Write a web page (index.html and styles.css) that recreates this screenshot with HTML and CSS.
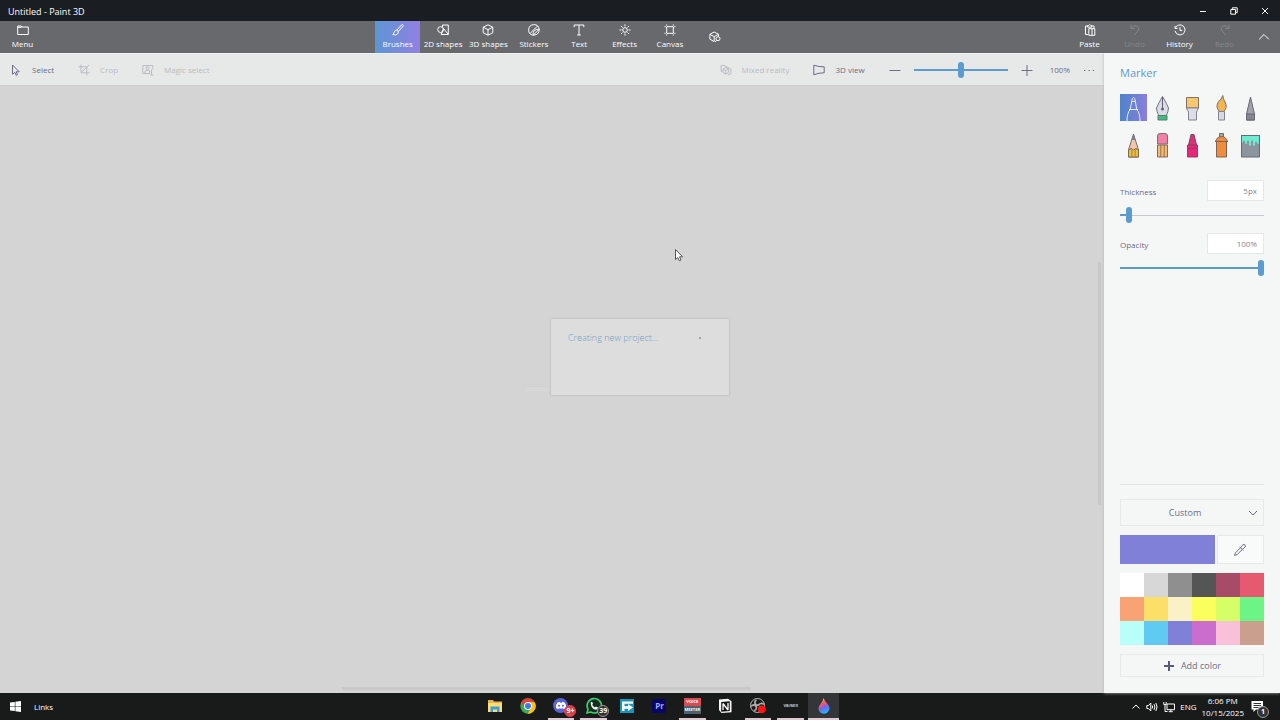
FILE: index.html
```
<!DOCTYPE html>
<html lang="en">
<head>
    <meta charset="UTF-8">
    <title>Untitled - Paint 3D</title>
    <link rel="stylesheet" href="styles.css">
</head>
<body>
<header class="titlebar">
    <h1>Untitled - Paint 3D</h1>
    <div class="winbtns">
        <button aria-label="Minimize"><svg width="8" height="8" viewBox="0 0 8 8"><path d="M1 4.5h6"/></svg></button>
        <button aria-label="Restore"><svg width="8" height="8" viewBox="0 0 8 8"><path d="M.8 2.5h4.7v4.7H.8zM2.3 2.3V.8h4.9v4.9H5.7"/></svg></button>
        <button aria-label="Close"><svg width="8" height="8" viewBox="0 0 8 8"><path d="M1 1l6 6M7 1L1 7"/></svg></button>
    </div>
</header>

<nav class="ribbon">
    <div class="ribbon-left">
        <button class="tab"><svg width="12" height="12" viewBox="0 0 12 12"><path d="M.7 2h3.600l.8 1h6.200v7.500H.7zM.7 3.400h3.600l.8-.6"/></svg>Menu</button>
    </div>
    <div class="tabs">
        <button class="tab active"><svg width="12" height="12" viewBox="0 0 12 12"><path d="M4.600 6.200L9.600.9q1-.6 1.500.1.400.7-.2 1.400L6.200 7.700M4.600 6.200q1.300.2 1.600 1.500M4.600 6.200q-1.800-.1-2.300 1.700-.3 1.900-1.600 2.600 3.300 1.200 4.900-.5.8-1 .6-2.300"/></svg>Brushes</button>
        <button class="tab"><svg width="12" height="12" viewBox="0 0 12 12"><circle cx="3.600" cy="5.600" r="2.900"/><path d="M5.500 3.200V1h5.800v9.500M6.500 4.500L11.300 10.500H4.200z"/></svg>2D shapes</button>
        <button class="tab"><svg width="12" height="12" viewBox="0 0 12 12"><path d="M6 .8l4.800 2.400v5.500L6 11.200 1.200 8.700V3.200zM1.200 3.200L6 5.700l4.800-2.500M6 5.700v5.500"/></svg>3D shapes</button>
        <button class="tab"><svg width="12" height="12" viewBox="0 0 12 12"><path d="M11.200 5.200A5.300 5.300 0 1 0 5.200 11.200M11.200 5.200Q11.500 10.800 5.200 11.200M5.200 11.200Q4.200 5.300 11.200 5.200M2 9.500L9.500 2M5.200 11.200l6-6"/></svg>Stickers</button>
        <button class="tab"><svg width="12" height="12" viewBox="0 0 12 12"><path d="M1.200 3.200V1h9.600v2.200M6 1v10M4.200 11h3.600"/></svg>Text</button>
        <button class="tab"><svg width="12" height="12" viewBox="0 0 12 12"><circle cx="6" cy="6" r="2.300"/><path d="M6 .4v2M6 9.600v2M.4 6h2M9.600 6h2M2 2l1.500 1.500M8.500 8.500L10 10M2 10l1.500-1.500M8.500 3.500L10 2"/></svg>Effects</button>
        <button class="tab"><svg width="12" height="12" viewBox="0 0 12 12"><path d="M2.700 2.700h6.600v6.600H2.700zM2.700.5v1.200M9.300.5v1.200M2.700 10.300v1.200M9.300 10.300v1.200M.5 2.700h1.200M.5 9.300h1.200M10.300 2.700h1.200M10.300 9.300h1.200"/></svg>Canvas</button>
        <button class="tab" aria-label="3D library"><svg width="12" height="12" viewBox="0 0 12 12"><path d="M5 10.500L.9 8.200V3.300L5.200 1l4.300 2.300v2M.9 3.300l4.300 2.300 4.300-2.300M5.200 5.600v5"/><circle cx="9" cy="7.700" r="2"/><path d="M7.600 9.200L6 11"/></svg></button>
    </div>
    <div class="ribbon-right">
        <button class="tab"><svg width="12" height="12" viewBox="0 0 12 12"><path d="M4 10.500H1.500V2h2.200M7.700 2H10v2.500M3.700 3.200V1.500h1L5.700.5l1 1h1v1.700zM4.800 4.700H8v6.600H4.800zM8 4.700h2.800v6.600H8"/></svg>Paste</button>
        <button class="tab" disabled><svg width="12" height="12" viewBox="0 0 12 12"><path d="M2 1v3.500h3.500M2.200 4.300Q4.500 1 7.800 1.800q3 1.200 1.800 4.400L5.200 11.200"/></svg>Undo</button>
        <button class="tab"><svg width="12" height="12" viewBox="0 0 12 12"><path d="M1 2v2.500h2.500M1.300 4.200a5 5 0 1 1-.2 2.700M6 3.200v3.300h2.300"/></svg>History</button>
        <button class="tab" disabled><svg width="12" height="12" viewBox="0 0 12 12"><path d="M10 1v3.500H6.500M9.800 4.300Q7.500 1 4.200 1.800q-3 1.200-1.800 4.400l4.400 5"/></svg>Redo</button>
        <button class="tab collapse" aria-label="Collapse"><svg width="12" height="12" viewBox="0 0 12 12"><path d="M1.200 8.300L6 3.500l4.800 4.800"/></svg></button>
    </div>
</nav>

<main class="workspace">
    <section class="stage">
        <div class="toolbar">
            <button class="tool"><svg width="12" height="12" viewBox="0 0 12 12"><path d="M2.500 1v9.300l2.300-2 1.400 3 1.300-.6-1.300-2.900h3z"/></svg>Select</button>
            <button class="tool" disabled><svg width="12" height="12" viewBox="0 0 12 12"><path d="M3 .5v8.300h8.500M.5 2.800h8.300v8.700M3 8.800L11 1"/></svg>Crop</button>
            <button class="tool" disabled><svg width="12" height="12" viewBox="0 0 12 12"><path d="M8 9.500H.8V1.500h10v4"/><circle cx="5.500" cy="4" r="1.500"/><path d="M2.800 9Q3 6 5.500 6T8 9M9.500 5.500v5M8 11h3.500"/></svg>Magic select</button>
            <button class="tool push" disabled><svg width="12" height="12" viewBox="0 0 12 12"><path d="M3.500 8.500L1 7V2l2-1 6 3M5.700 3.500l3 1.500v3.500l-3 1.500L3 8.500V5zM3 5l2.700 1.500L8.700 5M5.700 6.500V10M8 11l3-1.500V5L9.500 4"/></svg>Mixed reality</button>
            <button class="tool"><svg width="12" height="12" viewBox="0 0 12 12"><path d="M.8 1.200Q6 3 11.200 2.800v6Q6 8.600.8 10.800z"/></svg>3D view</button>
            <div class="zoom">
                <button aria-label="Zoom out"><svg width="12" height="12" viewBox="0 0 12 12"><path d="M.5 6.500h11"/></svg></button>
                <input type="range" class="slider" aria-label="Zoom" value="50" style="--fill:100%">
                <button aria-label="Zoom in"><svg width="12" height="12" viewBox="0 0 12 12"><path d="M.5 6.500h11M6 1v11"/></svg></button>
                <span class="percent">100%</span>
                <button aria-label="More"><svg width="12" height="12" viewBox="0 0 12 12"><path d="M1 6.500h1.300M5.400 6.500h1.300M9.800 6.500h1.300"/></svg></button>
            </div>
        </div>
        <div class="canvas">
            <i class="bar-v"></i>
            <i class="bar-h"></i>
        </div>
    </section>

    <aside class="panel">
        <h2>Marker</h2>
        <div class="brushes">
            <button class="active" aria-label="Marker"><svg viewBox="0 0 27 27"><g fill="none" stroke="#e4ecff"><path d="M7 27q0-8 3.200-11.500h6.600Q20 19 20 27M9 15.500h9M10.200 15.500l1.500-8h3.600l1.500 8M11.700 7.500q.3-4 1.800-4t1.800 4"/></g></svg></button>
            <button aria-label="Calligraphy pen"><svg viewBox="0 0 27 27"><path d="M13.500 2.500Q18 10 19.500 14q0 3-2.200 7.500H9.700Q7.500 17 7.500 14 9 10 13.500 2.500z" fill="#dadde8" stroke="#77727d"/><path d="M13.500 3v11" stroke="#665e70"/><circle cx="13.500" cy="15" r="1.500" fill="#665e70"/><path d="M9 21.500h9V26H9z" fill="#45b980" stroke="#55816e"/></svg></button>
            <button aria-label="Oil brush"><svg viewBox="0 0 27 27"><path d="M7.500 3.500h12V14h-12z" fill="#f8c66c" stroke="#81716a"/><path d="M7.500 14h12l-2 4v8h-8v-8z" fill="#dbdde8" stroke="#85818e"/></svg></button>
            <button aria-label="Watercolor"><svg viewBox="0 0 27 27"><path d="M14.800 1.500Q15 5 17 8q3 6-1.500 9.500h-4Q7 13 10.500 7.500q3-2 4.300-6z" fill="#f3b552" stroke="#786d68"/><path d="M10.500 17.500h6V26h-6z" fill="#d7d9e4" stroke="#85818e"/></svg></button>
            <button aria-label="Pixel pen"><svg viewBox="0 0 27 27"><path d="M13.500 3L9.500 20v6h8v-6z" fill="#a1a3ab" stroke="#686773"/><path d="M9.500 20h8v6h-8z" fill="#85868e" stroke="#686773"/></svg></button>
            <button aria-label="Pencil"><svg viewBox="0 0 27 27"><path d="M13.500 3L8.500 19v7h10v-7z" fill="#f2c6a8" stroke="#756b74"/><path d="M11.500 9l2-6 2 6z" fill="#7d7e92"/><path d="M8.500 19l2.500-1.500 2.500 1.500 2.500-1.500 2.500 1.500v7h-10z" fill="#edbd3c" stroke="#7b6856"/><path d="M11.800 19v7M15.200 19v7" stroke="#a88a48"/></svg></button>
            <button aria-label="Eraser"><svg viewBox="0 0 27 27"><path d="M8.500 13V5q0-2.500 2.500-2.500h5q2.500 0 2.500 2.500v8z" fill="#f080a5" stroke="#826a75"/><path d="M8.500 14h10v12h-10z" fill="#f5ba70" stroke="#826b5c"/><path d="M11.800 14v12M15.200 14v12" stroke="#917158"/></svg></button>
            <button aria-label="Crayon"><svg viewBox="0 0 27 27"><path d="M9.500 14L12 3.500h3L17.500 14z" fill="#d83576" stroke="#824360"/><path d="M8.500 14h10v12h-10z" fill="#e5267b" stroke="#914365"/><path d="M8.500 17.500h10" stroke="#ac3068"/></svg></button>
            <button aria-label="Spray can"><svg viewBox="0 0 27 27"><path d="M11.500 2.500h4v4h-4z" fill="#9cae9d" stroke="#746a66"/><path d="M7.500 10.500Q9 5.500 13.500 5.500t6 5zM8.500 10.500h10V26h-10z" fill="#f18b3d" stroke="#7e6353"/><path d="M7 10.500h13" stroke="#7e6353"/></svg></button>
            <button aria-label="Fill"><svg viewBox="0 0 27 27"><path d="M4.500 4.500h18V26h-18z" fill="#8c949d" stroke="#656a76"/><path d="M5 5h17v7q-1 2-2 0v-1q-1-1-2 0v3q-1 2-2 0v-4q-1-1-2 0v4q-1 2-2 0v-4q-1-1-2 0v2q-1 2-2 0v-2q-1-1-2 0v1q-1 1-1 0z" fill="#6eebcf"/><path d="M4 4.500h19" stroke="#656a76"/></svg></button>
        </div>
        <div class="setting">
            <label for="thickness">Thickness</label>
            <input type="text" class="amount" id="thickness" value="5px">
            <input type="range" class="slider" aria-label="Thickness" value="4" style="--fill:5%">
        </div>
        <div class="setting">
            <label for="opacity">Opacity</label>
            <input type="text" class="amount" id="opacity" value="100%">
            <input type="range" class="slider" aria-label="Opacity" value="100" style="--fill:100%">
        </div>
        <div class="colors">
            <div class="custom">
                <select aria-label="Material"><option>Custom</option></select>
                <svg width="10" height="10" viewBox="0 0 10 10"><path d="M1 3l4 4 4-4"/></svg>
            </div>
            <div class="current">
                <button class="swatch" aria-label="Current color"></button>
                <button class="picker" aria-label="Eyedropper"><svg width="14" height="14" viewBox="0 0 14 14"><path d="M7.500 4.700L2.500 9.800 1.500 12.500 4.200 11.500 9.300 6.500M6.500 3.700l3.800 3.800M7.500 4.700l2.400-3q1-.8 2 .2t.2 2L9.300 6.500"/></svg></button>
            </div>
            <div class="palette">
                <button class="c1" aria-label="White"></button>
                <button class="c2" aria-label="Light gray"></button>
                <button class="c3" aria-label="Gray"></button>
                <button class="c4" aria-label="Dark gray"></button>
                <button class="c5" aria-label="Dark red"></button>
                <button class="c6" aria-label="Red"></button>
                <button class="c7" aria-label="Orange"></button>
                <button class="c8" aria-label="Gold"></button>
                <button class="c9" aria-label="Cream"></button>
                <button class="c10" aria-label="Yellow"></button>
                <button class="c11" aria-label="Lime"></button>
                <button class="c12" aria-label="Green"></button>
                <button class="c13" aria-label="Aqua"></button>
                <button class="c14" aria-label="Blue"></button>
                <button class="c15" aria-label="Indigo"></button>
                <button class="c16" aria-label="Purple"></button>
                <button class="c17" aria-label="Pink"></button>
                <button class="c18" aria-label="Brown"></button>
            </div>
            <button class="add"><svg width="12" height="12" viewBox="0 0 12 12"><path d="M6 1v10M1 6h10"/></svg>Add color</button>
        </div>
    </aside>
</main>

<div class="dialog" role="dialog" aria-label="Creating new project">
    <p>Creating new project...</p>
    <i class="spinner"></i>
</div>
<i class="ghost"></i>
<svg class="cursor" width="10" height="15" viewBox="0 0 10 15"><path d="M1.500 1.500v10l2.300-2 1.500 3.300 1.700-.8-1.500-3.200h3z"/></svg>

<footer class="taskbar">
    <div class="start">
        <button aria-label="Start"><svg class="win" width="11" height="11" viewBox="0 0 11 11"><path d="M0 1.600l4.800-.7v4.300H0zM5.400.8L11 0v5.200H5.400zM0 5.800h4.800V10L0 9.400zM5.400 5.800H11V11l-5.600-.8z"/></svg></button>
        <a href="#">Links</a>
    </div>
    <div class="apps">
        <button aria-label="File Explorer"><svg viewBox="0 0 18 18"><path d="M2 3h5l1 1.500h8V15H2z" fill="#e9b44c"/><path d="M2 6h14v9H2z" fill="#ffdc72"/><path d="M4.500 9.500h9V15h-2.500v-2.500H7V15H4.500z" fill="#3e9ddc"/></svg></button>
        <button aria-label="Chrome"><svg viewBox="0 0 18 18"><circle cx="9" cy="9" r="7.700" fill="#3daa57"/><path d="M2.300 5.200A7.700 7.700 0 0 1 15.700 5.200H9a3.800 3.800 0 0 0-3.300 5.600z" fill="#e34133"/><path d="M15.700 5.200A7.700 7.700 0 0 1 8.500 16.700l3.800-5.900A3.800 3.800 0 0 0 9 5.200z" fill="#fbc116"/><circle cx="9" cy="9" r="3.900" fill="#fff"/><circle cx="9" cy="9" r="3" fill="#3e7de8"/></svg></button>
        <button class="open" aria-label="Discord"><svg viewBox="0 0 18 18"><circle cx="8.500" cy="8.500" r="7.500" fill="#5963d8"/><path d="M4 11Q3.700 7 5.500 5.500l2-.7.7 1h1.600l.7-1 2 .7Q14.300 7 14 11l-2.200 1.200-.7-1Q9 11.900 6.900 11.200l-.7 1z" fill="#fff"/><circle cx="7" cy="8.700" r="1" fill="#5963d8"/><circle cx="11" cy="8.700" r="1" fill="#5963d8"/></svg><b class="badge red">9+</b></button>
        <button class="open" aria-label="WhatsApp"><svg viewBox="0 0 18 18"><path d="M2 16l1-3.800A7.200 7.200 0 1 1 5.800 15z" fill="#182c20" stroke="#38d366" stroke-width="1.600"/><path d="M5.700 5.200l1.400-.4.900 2-.8 1Q8 9.500 10 10.500l1-.9 2 1q0 2.200-2.200 2.200Q5.500 11.500 5.700 5.200z" fill="#e9fff0"/></svg><b class="badge">39</b></button>
        <button aria-label="File transfer"><svg viewBox="0 0 18 18"><path d="M2 2h14v14H2z" fill="#1597bd"/><path d="M4 4.500h11v2.300H6.500v2.400H10V7l5 3.500-5 3.500v-2.300H6.500V14H4z" fill="#fff"/></svg></button>
        <button aria-label="Premiere Pro"><b class="pr">Pr</b></button>
        <button class="open" aria-label="Voicemeeter"><span class="voice"><b>VOICE</b><b>MEETER</b></span></button>
        <button aria-label="Notion"><svg viewBox="0 0 18 18"><path d="M3 2.500l9-.7 3.500 2.500v11l-10 .7L3 13z" fill="#f7f7f7"/><path d="M5.200 5l8.600-.7V14l-8.600.7z" fill="#151515"/><path d="M7 13V6.500M7 6.500l5 6.500M12 6v7" stroke="#fff" stroke-width="1.300" fill="none"/></svg></button>
        <button class="open" aria-label="OBS"><svg viewBox="0 0 18 18"><circle cx="8.500" cy="8.500" r="7" fill="#191919" stroke="#bbb"/><path d="M7.500 3Q4.500 5 7 7.700q1.500 1 3-.2Q12.500 5 15 7.500M2 9.500q2.500-2.700 5-.5 1.500 3-2 5M9.500 14.500Q13 12 10.500 9.200" fill="none" stroke="#aaa" stroke-width="1.700"/><circle cx="12.800" cy="12.300" r="3.900" fill="#fb1515"/></svg></button>
        <button class="open" aria-label="VB-Audio"><b class="vb">VB/MIX</b></button>
        <button class="open current-app" aria-label="Paint 3D"><svg viewBox="0 0 18 18"><defs><linearGradient id="drop" x1="0.300" y1="0" x2="0.600" y2="1"><stop offset="0" stop-color="#ffc34d"/><stop offset=".3" stop-color="#f2625a"/><stop offset=".5" stop-color="#c054b6"/><stop offset=".65" stop-color="#5b75ed"/><stop offset="1" stop-color="#27b7f4"/></linearGradient></defs><path d="M8.500 1Q9.500 4 12.500 7q3 3.300 1.600 6Q12.500 16.700 9 16.700T3.900 13.500Q2.500 10.500 5.500 7 8 4 8.500 1z" fill="url(#drop)"/></svg></button>
    </div>
    <div class="tray">
        <button aria-label="Show hidden icons"><svg width="10" height="10" viewBox="0 0 10 10"><path d="M1.500 6.500L5 3l3.500 3.500"/></svg></button>
        <button aria-label="Volume"><svg width="12" height="12" viewBox="0 0 12 12"><path d="M.8 4.500h1.700L4.800 2v8L2.500 7.500H.8zM6.200 4.500q1 1.500 0 3M8 3.200q1.800 2.800 0 5.600M9.800 2q2.600 4 0 8"/></svg></button>
        <button aria-label="Network"><svg width="12" height="12" viewBox="0 0 12 12"><path d="M4 3h7.500v5.700H4zM5.800 10.700h4M7.800 8.700v2M.8 1v2.500h2.400V1M2 3.500v7h2.500"/></svg></button>
        <span>ENG</span>
        <time class="clock"><span>6:06 PM</span><span>10/15/2025</span></time>
        <button class="notice" aria-label="Notifications"><svg width="13" height="13" viewBox="0 0 13 13"><path d="M.5 1h11.500v8.500H5l-2.500 2.500V9.500h-2z" fill="#fff" stroke="none"/><path d="M2.500 3.500h7.500M2.500 5.500h7.500M2.500 7.500h5" stroke="#333"/></svg><b class="badge">1</b></button>
    </div>
</footer>
</body>
</html>
```

FILE: styles.css
```
*{margin:0;padding:0;box-sizing:border-box;}
body{
    min-height: 100vh;
    display: flex;
    flex-direction: column;
    position: relative;
    font-family: "Segoe UI","Open Sans","Noto Sans",sans-serif;
    font-size: 8px;
    line-height: 12px;
    color: #6c6c84;
    background: #d4d4d4;
}
button,input,select{font: inherit;color: inherit;border: 0;background: none;}
button{display: flex;align-items: center;justify-content: center;}
a{color: inherit;text-decoration: none;}
svg{flex: none;fill: none;stroke: currentColor;}

.titlebar{
    display: flex;
    justify-content: space-between;
    height: 21px;
    padding-left: 8px;
    background: #1a1d21;
    color: #fff;
}
.titlebar h1{font-size: 9px;font-weight: 400;line-height: 23px;}
.winbtns{display: flex;}
.winbtns button{width: 31px;}

/* ribbon */
.ribbon{
    display: grid;
    grid-template-columns: 375px 1fr auto;
    position: relative;
    z-index: 2;
    height: 32px;
    background: #68696c;
    color: #fff;
}
.ribbon-left,.ribbon-right{display: flex;}
.tabs{display: grid;grid-template-columns: repeat(8,1fr);width: 363px;}
.tab{
    flex-direction: column;
    gap: 2px;
    min-width: 45px;
    white-space: nowrap;
}
.tab:disabled{color: #85868a;}
.tab.active{background: linear-gradient(90deg,#5c96d4,#9180e2);}
.tab.collapse{min-width: 33px;}

.workspace{display: flex;flex: 1;}
.stage{flex: 1;display: flex;flex-direction: column;}
.toolbar{
    display: flex;
    align-items: center;
    gap: 24px;
    height: 32px;
    padding: 0 9px 0 10px;
    background: #e7e8e8;
    border-top: 1px solid #f0f1f1;
}
.tool{gap: 10px;}
.tool:disabled{color: #bbbbc2;}
.push{margin-left: auto;}
.zoom{display: flex;align-items: center;gap: 13px;}
.zoom .slider{width: 94px;}
.percent{margin-left: 4px;}

.slider{
    appearance: none;
    display: block;
    height: 16px;
    background: linear-gradient(#5b9bd0,#5b9bd0) left center/var(--fill) 2px no-repeat,
        linear-gradient(#c5c9cd,#c5c9cd) center/100% 1px no-repeat;
}
.slider::-webkit-slider-thumb{
    appearance: none;
    width: 6px;
    height: 16px;
    border-radius: 3px;
    background: #5b9bd0;
}

.canvas{
    flex: 1;
    position: relative;
    background: #d4d4d4;
    border-top: 1px solid #cdcdcd;
}
.bar-v,.bar-h{position: absolute;background: #c8c8c8;}
.bar-v{right: 3px;top: 29%;width: 3px;height: 40%;}
.bar-h{left: 31%;bottom: 3px;width: 37%;height: 3px;}

/* right panel */
.panel{
    display: flex;
    flex-direction: column;
    width: 176px;
    padding: 10px 16px 16px;
    background: #f5f7f7;
    box-shadow: 0 0 3px #b5b5b5;
    z-index: 1;
}
.panel h2{
    font-size: 11px;
    font-weight: 400;
    line-height: 20px;
    color: #5b9bd0;
}
.brushes{
    display: grid;
    grid-template-columns: repeat(5,27px);
    justify-content: space-between;
    gap: 10px 0;
    margin: 11px 0 22px;
}
.brushes button{height: 27px;}
.brushes .active{background: linear-gradient(90deg,#4e83cb,#8b7ddd);}
.brushes svg{width: 27px;height: 27px;stroke: none;}
.setting{
    display: grid;
    grid-template-columns: 1fr 57px;
    align-items: center;
    row-gap: 6px;
    margin-bottom: 10px;
}
.setting label{padding-top: 3px;}
.setting .slider{grid-column: 1/3;width: 100%;}
.amount{
    width: 57px;
    height: 21px;
    padding: 0 6px;
    text-align: right;
    color: #85858f;
    background: #fff;
    border: 1px solid #e5e7e8;
}
.colors{
    display: flex;
    flex-direction: column;
    gap: 9px;
    margin-top: auto;
    padding-top: 14px;
    border-top: 1px solid #e3e5e5;
    font-size: 9px;
}
.custom{display: grid;align-items: center;}
.custom select{
    grid-area: 1/1;
    height: 27px;
    padding-right: 14px;
    appearance: none;
    text-align: center;
    text-align-last: center;
    border: 1px solid #e7e9e9;
}
.custom svg{grid-area: 1/1;justify-self: end;margin-right: 6px;pointer-events: none;}
.current{display: grid;grid-template-columns: 2fr 1fr;gap: 2px;height: 29px;}
.swatch{background: #8080d8;}
.picker{border: 1px solid #e7e9e9;background: #f9fafa;}
.palette{display: grid;grid-template-columns: repeat(6,1fr);grid-auto-rows: 24px;}
.c1{background: #fff;}
.c2{background: #d7d7d7;}
.c3{background: #8f8f8f;}
.c4{background: #555;}
.c5{background: #a84b68;}
.c6{background: #e65a70;}
.c7{background: #f9a273;}
.c8{background: #fbdf69;}
.c9{background: #fbf1c7;}
.c10{background: #fbff5e;}
.c11{background: #d6ff67;}
.c12{background: #6cf487;}
.c13{background: #b8fffa;}
.c14{background: #60caf3;}
.c15{background: #8080d8;}
.c16{background: #cb6dcc;}
.c17{background: #f9c0d9;}
.c18{background: #cb9f8d;}
.add{gap: 6px;height: 23px;border: 1px solid #e7e9e9;}
.add svg{stroke: #5a5a80;stroke-width: 2;}

/* things floating over the canvas */
.dialog{
    position: absolute;
    left: 50%;
    top: 357px;
    transform: translate(-50%,-50%);
    display: flex;
    justify-content: space-between;
    width: 178px;
    height: 76px;
    padding: 13px 28px 12px 17px;
    font-size: 9px;
    font-weight: 300;
    color: #6f9fc2;
    background: #dddddd;
    box-shadow: 0 0 2px #aaa;
}
.spinner{width: 2px;height: 2px;margin-top: 5px;border-radius: 1px;background: #82949f;}
.ghost{
    position: absolute;
    left: 525px;
    top: 388px;
    width: 24px;
    height: 3px;
    border: solid #d9d9d9;
    border-width: 1px 0;
}
.cursor{position: absolute;left: 674px;top: 248px;fill: #fff;stroke: #555;}

.taskbar{
    display: grid;
    grid-template-columns: 479px 1fr auto;
    height: 27px;
    background: #191b1b;
    color: #fff;
}
.start,.tray{display: flex;align-items: center;}
.start{gap: 13px;padding-left: 10px;}
.win{fill: #fff;stroke: none;}
.apps{display: grid;grid-template-columns: repeat(11,1fr);width: 361px;}
.apps button{
    position: relative;
    margin: 0 3px;
    border-bottom: 2px solid transparent;
}
.apps .open{border-color: #dcc9d2;}
.apps .current-app{margin: 0 1px;background: #343537;}
.apps svg{width: 18px;height: 18px;stroke: none;}
.badge{
    position: absolute;
    right: -2px;
    bottom: 1px;
    min-width: 12px;
    height: 12px;
    border: 1px solid #999;
    border-radius: 6px;
    font-size: 7px;
    line-height: 10px;
    background: #333;
}
.badge.red{border-color: #d8424b;background: #d8424b;}
.pr{width: 14px;height: 14px;border-radius: 2px;line-height: 14px;background: #070763;color: #aaa5ff;}
.voice{display: grid;width: 17px;font-size: 4px;line-height: 8px;}
.voice b:first-child{background: #d84b4e;}
.voice b:last-child{background: #4c626c;}
.vb{font-size: 4px;color: #ccc;}
.tray{gap: 5px;padding-right: 16px;}
.clock{display: grid;text-align: center;}
.notice{position: relative;margin-left: 2px;}
.notice .badge{right: -5px;bottom: -5px;}
```
